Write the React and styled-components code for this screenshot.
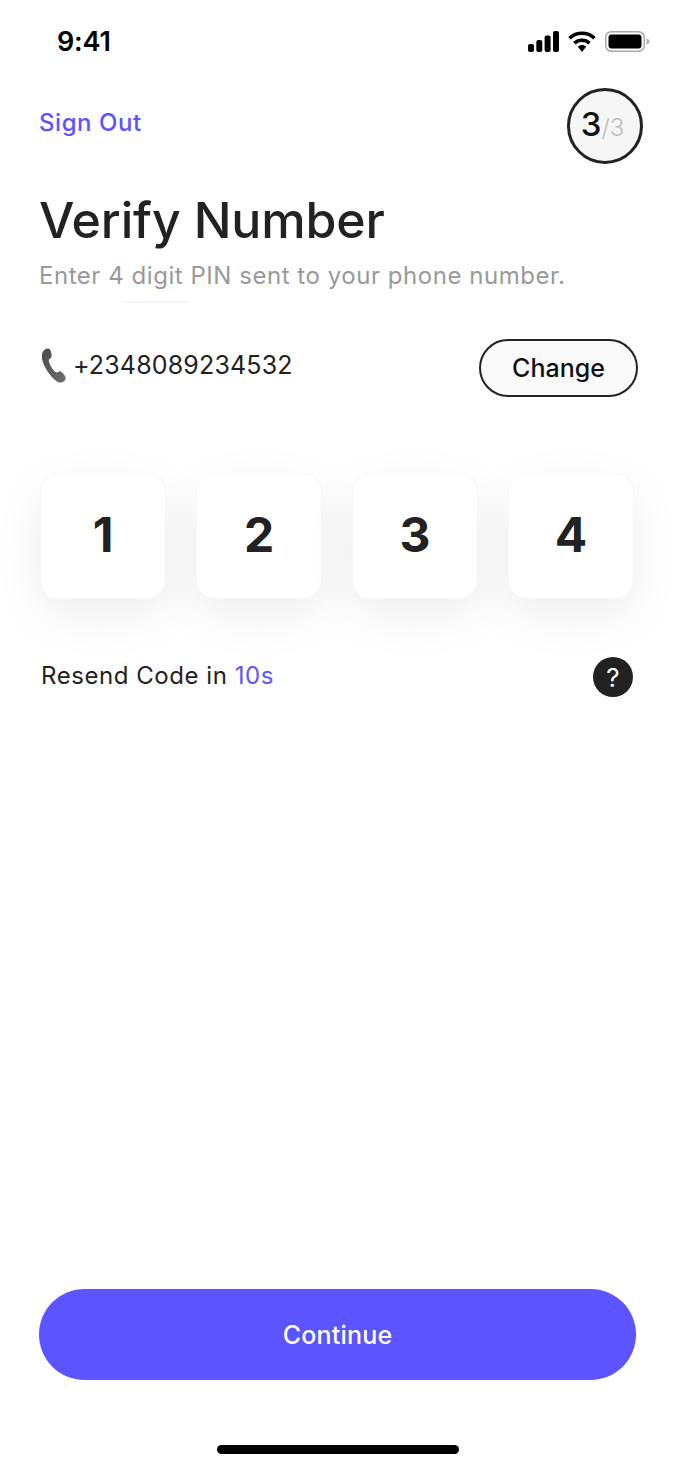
import React from 'react';
import styled, { createGlobalStyle } from 'styled-components';

const GlobalStyle = createGlobalStyle`
  html, body {
    margin: 0;
    background: #fff;
  }
  * {
    box-sizing: border-box;
  }
`;

const Screen = styled.div`
  width: 674px;
  height: 1471px;
  display: flex;
  flex-direction: column;
  background: #fff;
  font-family: Inter, "Liberation Sans", sans-serif;
  color: #222;
  overflow: hidden;
`;

const StatusBar = styled.div`
  height: 82px;
  padding: 26px 24px 0 57px;
  display: flex;
  justify-content: space-between;
  align-items: flex-start;
`;

const Clock = styled.span`
  font-size: 27px;
  line-height: 32px;
  font-weight: 600;
  color: #000;
  letter-spacing: -0.2px;
`;

const StatusIcons = styled.div`
  display: flex;
  gap: 9px;
  padding-top: 5px;
`;

const Header = styled.div`
  height: 81px;
  padding: 6px 31px 0 39px;
  display: flex;
  justify-content: space-between;
  align-items: center;
`;

const SignOut = styled.a`
  font-size: 24px;
  line-height: 30px;
  font-weight: 500;
  color: #5b54ff;
  letter-spacing: 0.55px;
  margin-top: -6px;
`;

const StepBadge = styled.div`
  width: 76px;
  height: 76px;
  border-radius: 50%;
  border: 3.5px solid #222;
  background: #f6f6f6;
  display: flex;
  align-items: baseline;
  justify-content: center;
  line-height: 67px;
  padding-right: 5px;
`;

const StepCurrent = styled.span`
  font-size: 33px;
  font-weight: 500;
  color: #111;
`;

const StepTotal = styled.span`
  font-size: 24px;
  font-weight: 300;
  color: #bdbdbd;
`;

const Title = styled.h1`
  margin: 27px 0 0 39px;
  font-size: 50px;
  line-height: 60px;
  font-weight: 500;
  letter-spacing: -0.15px;
  color: #222;
`;

const Subtitle = styled.p`
  margin: 11px 0 0 39px;
  font-size: 24px;
  line-height: 30px;
  font-weight: 400;
  letter-spacing: 0.54px;
  color: #999;
`;

const FaintRule = styled.div`
  width: 62px;
  height: 2px;
  margin: 10px 0 0 126px;
  background: #f4f4ff;
`;

const PhoneRow = styled.div`
  margin-top: 36px;
  padding: 0 36px 0 41px;
  display: flex;
  justify-content: space-between;
  align-items: center;
`;

const PhoneInfo = styled.div`
  display: flex;
  align-items: center;
  gap: 7px;
  margin-top: -6px;
`;

const PhoneNumber = styled.span`
  font-size: 25px;
  line-height: 30px;
  letter-spacing: 0.16px;
  color: #222;
`;

const ChangeButton = styled.button`
  width: 159px;
  height: 58px;
  border-radius: 29px;
  border: 2px solid #222;
  background: #fafafa;
  font-family: inherit;
  font-size: 25px;
  font-weight: 500;
  color: #111;
  padding: 0;
`;

const PinRow = styled.div`
  margin-top: 76px;
  padding-left: 40px;
  display: flex;
  gap: 30px;
`;

const PinCell = styled.div`
  width: 126px;
  height: 126px;
  border-radius: 18px;
  border: 1px solid #f5f5f5;
  background: #fff;
  box-shadow: 0 16px 50px rgba(0, 0, 0, 0.07);
  display: flex;
  align-items: center;
  justify-content: center;
  padding-bottom: 3px;
  font-size: 48px;
  font-weight: 700;
  color: #222;
`;

const ResendRow = styled.div`
  margin-top: 58px;
  padding: 0 41px;
  display: flex;
  justify-content: space-between;
  align-items: center;
`;

const ResendText = styled.span`
  font-size: 24px;
  line-height: 30px;
  letter-spacing: 0.55px;
  color: #222;
  margin-top: -2px;
`;

const Countdown = styled.span`
  color: #5b54ff;
`;

const HelpDot = styled.div`
  width: 40px;
  height: 40px;
  border-radius: 50%;
  background: #222;
  color: #fff;
  display: flex;
  align-items: center;
  justify-content: center;
  font-size: 26px;
  font-weight: 400;
`;

const Spacer = styled.div`
  flex: 1;
`;

const ContinueButton = styled.button`
  align-self: flex-start;
  width: 597px;
  height: 91px;
  margin-left: 39px;
  border: 0;
  border-radius: 46px;
  background: #5b54ff;
  color: #fff;
  font-family: inherit;
  font-size: 25px;
  font-weight: 500;
  letter-spacing: 0.2px;
  padding: 0;
`;

const HomeIndicator = styled.div`
  align-self: flex-start;
  width: 242px;
  height: 9px;
  margin: 65px 0 17px 217px;
  border-radius: 5px;
  background: #000;
`;

function SignalIcon() {
  return (
    <svg width="31" height="21" viewBox="0 0 31 21">
      <rect x="0" y="13" width="6" height="8" rx="2" fill="#000" />
      <rect x="8.3" y="9" width="6" height="12" rx="2" fill="#000" />
      <rect x="16.6" y="4.5" width="6" height="16.5" rx="2" fill="#000" />
      <rect x="25" y="0" width="6" height="21" rx="2" fill="#000" />
    </svg>
  );
}

function WifiIcon() {
  return (
    <svg width="28" height="21" viewBox="0 0 28 21" fill="none">
      <path d="M1.5 7.2C8.6 0.6 19.4 0.6 26.5 7.2" stroke="#000" strokeWidth="3.6" />
      <path d="M6.4 12.2C10.8 8.3 17.2 8.3 21.6 12.2" stroke="#000" strokeWidth="3.6" />
      <path d="M9.7 15.6L14 21L18.3 15.6C15.8 13.5 12.2 13.5 9.7 15.6Z" fill="#000" />
    </svg>
  );
}

function BatteryIcon() {
  return (
    <svg width="45" height="21" viewBox="0 0 45 21" fill="none">
      <rect x="0.75" y="0.75" width="38.5" height="19.5" rx="5.5" stroke="#a9a9a9" strokeWidth="1.5" />
      <rect x="3.5" y="3.5" width="33" height="14" rx="3" fill="#000" />
      <path d="M41.5 7.5C43.5 8 44.5 9 44.5 10.5C44.5 12 43.5 13 41.5 13.5Z" fill="#b5b5b5" />
    </svg>
  );
}

function PhoneIcon() {
  return (
    <svg width="25" height="35" viewBox="0 0 25 35">
      <defs>
        <linearGradient id="handset" x1="0" y1="0" x2="1" y2="1">
          <stop offset="0" stopColor="#4a4a4a" />
          <stop offset="1" stopColor="#6e6e6e" />
        </linearGradient>
      </defs>
      <path
        d="M2.2 3.2C4 0.6 7.6 -0.4 9 1.4C10.2 3 10.8 6.6 10.6 8.6C10.5 10 8.6 10.6 8 11.6C7.4 12.8 8.6 16 10.4 19.2C12.2 22.2 14.4 24.4 15.8 24.4C17 24.4 17.8 22.8 19.2 23.2C21 23.8 23.6 26.8 24.4 28.8C25.2 30.6 24 33 21.4 34.2C19.4 35.2 16.8 34.4 14 32C9.6 28.2 5 21.8 2.4 15.4C0.4 10.4 0.4 5.8 2.2 3.2Z"
        fill="url(#handset)"
      />
    </svg>
  );
}

const pin = ['1', '2', '3', '4'];

export default function App() {
  return (
    <Screen>
      <GlobalStyle />
      <StatusBar>
        <Clock>9:41</Clock>
        <StatusIcons>
          <SignalIcon />
          <WifiIcon />
          <BatteryIcon />
        </StatusIcons>
      </StatusBar>
      <Header>
        <SignOut>Sign Out</SignOut>
        <StepBadge>
          <StepCurrent>3</StepCurrent>
          <StepTotal>/3</StepTotal>
        </StepBadge>
      </Header>
      <Title>Verify Number</Title>
      <Subtitle>Enter 4 digit PIN sent to your phone number.</Subtitle>
      <FaintRule />
      <PhoneRow>
        <PhoneInfo>
          <PhoneIcon />
          <PhoneNumber>+2348089234532</PhoneNumber>
        </PhoneInfo>
        <ChangeButton>Change</ChangeButton>
      </PhoneRow>
      <PinRow>
        {pin.map((d) => (
          <PinCell key={d}>{d}</PinCell>
        ))}
      </PinRow>
      <ResendRow>
        <ResendText>
          Resend Code in <Countdown>10s</Countdown>
        </ResendText>
        <HelpDot>?</HelpDot>
      </ResendRow>
      <Spacer />
      <ContinueButton>Continue</ContinueButton>
      <HomeIndicator />
    </Screen>
  );
}
